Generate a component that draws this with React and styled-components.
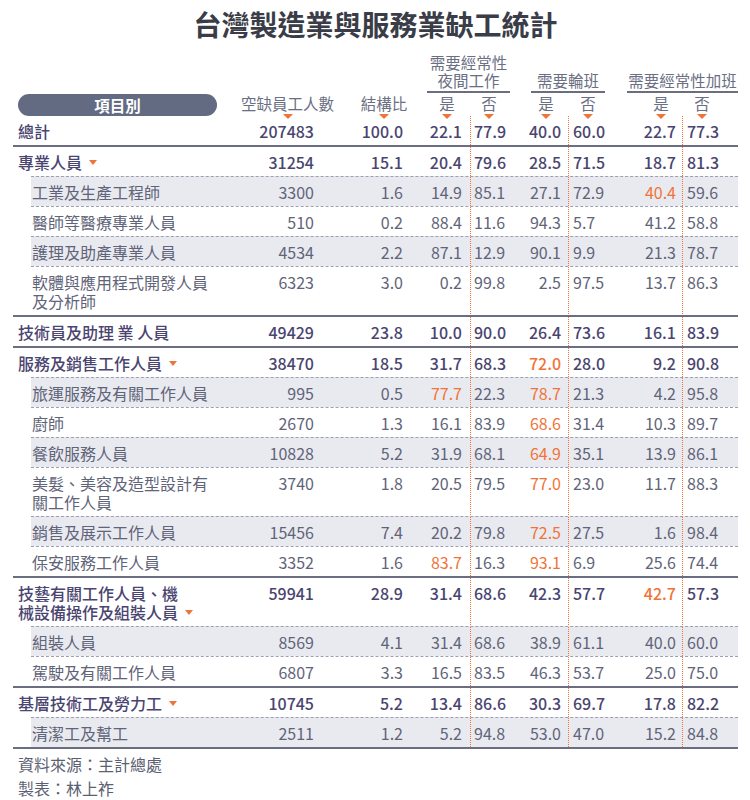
import React from 'react';
import styled, { createGlobalStyle } from 'styled-components';

const ORANGE = '#f07438';
const COLS = '1fr 74px 89px 67px 59px 39px 53px 61px 56px';
const FONT = '"Noto Sans CJK TC", "Noto Sans CJK JP", "Noto Sans", sans-serif';

const GlobalStyle = createGlobalStyle`
  html, body { margin: 0; padding: 0; background: #ffffff; }
  body { font-family: ${FONT}; }
`;

const Page = styled.div`
  width: 725px;
  padding: 8px 12px 0 13px;
  font-family: ${FONT};
`;

const Title = styled.h1`
  margin: 0;
  font-size: 28px;
  line-height: 32px;
  font-weight: 700;
  text-align: center;
  color: #3a3d47;
`;

const Header = styled.div`
  display: grid;
  grid-template-columns: ${COLS};
  grid-template-rows: auto 22px;
  row-gap: 1px;
  margin-top: 13px;
  color: #6b6f84;
  font-size: 15.5px;
`;

const GroupTitle = styled.div`
  grid-row: 1;
  grid-column: ${(p) => p.$col} / span 2;
  margin: 0 ${(p) => p.$mr}px 0 ${(p) => p.$ml}px;
  align-self: end;
  padding-bottom: 2px;
  border-bottom: 2px solid #6b6e80;
  line-height: 18px;
  text-align: center;
  white-space: pre;
`;

const Pill = styled.div`
  grid-row: 2;
  grid-column: 1;
  margin-left: 5px;
  width: 199px;
  height: 22px;
  border-radius: 11px;
  background: #636b82;
  color: #ffffff;
  font-weight: 700;
  font-size: 15.5px;
  line-height: 22px;
  text-align: center;
`;

const HeadCell = styled.div`
  grid-row: 2;
  display: flex;
  justify-content: ${(p) => (p.$align === 'right' ? 'flex-end' : 'flex-start')};
  padding-left: ${(p) => (p.$align === 'left' ? p.$pad : 0)}px;
  padding-right: ${(p) => (p.$align === 'right' ? p.$pad : 0)}px;
`;

const HeadMark = styled.div`
  width: ${(p) => p.$w}px;
  display: flex;
  flex-direction: column;
  align-items: center;
`;

const HeadText = styled.span`
  line-height: 19px;
  white-space: nowrap;
`;

const Tri = styled.span`
  display: inline-block;
  width: 0;
  height: 0;
  border-left: ${(p) => p.$w / 2}px solid transparent;
  border-right: ${(p) => p.$w / 2}px solid transparent;
  border-top: 5px solid ${ORANGE};
`;

const HeadTri = styled(Tri)`
  margin-top: 1px;
`;

const InlineTri = styled(Tri)`
  margin-left: 7px;
  vertical-align: 4px;
`;

const Group = styled.div`
  border-bottom: 2px solid #6b6d80;
`;

const Row = styled.div`
  display: grid;
  grid-template-columns: ${COLS};
  margin-left: ${(p) => (p.$sub ? 18 : 0)}px;
  border-top: ${(p) => (p.$sub ? '1px dashed #9d9fb3' : '0')};
  background: ${(p) => (p.$shade ? '#e9eaf0' : 'transparent')};
  color: ${(p) => (p.$sub ? '#5f6479' : '#4a4570')};
  font-size: 16px;
  line-height: 19px;
  font-weight: ${(p) => (p.$sub ? 400 : 500)};
`;

const LabelCell = styled.div`
  padding: 6px 0 4px ${(p) => (p.$sub ? 1 : 5)}px;
  white-space: pre-line;
`;

const Cell = styled.div`
  padding-top: 6px;
  padding-bottom: 4px;
  text-align: ${(p) => p.$align};
  padding-left: ${(p) => (p.$align === 'left' ? p.$pad + (p.$div ? 1 : 0) : 0)}px;
  padding-right: ${(p) => (p.$align === 'right' ? p.$pad : 0)}px;
  background-image: ${(p) =>
    p.$div ? `linear-gradient(to bottom, ${ORANGE} 50%, transparent 50%)` : 'none'};
  background-size: 1px 2px;
  background-repeat: repeat-y;
  background-position: 0 0;
  color: ${(p) => (p.$hi ? ORANGE : 'inherit')};
  white-space: nowrap;
`;

const Footer = styled.div`
  padding: 3px 0 0 5px;
  font-size: 16px;
  line-height: 24px;
  color: #5b5f72;
`;

const NUM_COLS = [
  { align: 'right', pad: 0, w: 53, head: '空缺員工人數' },
  { align: 'right', pad: 0, w: 38, head: '結構比' },
  { align: 'right', pad: 8, w: 30, head: '是' },
  { align: 'left', pad: 3, w: 30, head: '否', div: true },
  { align: 'right', pad: 7, w: 30, head: '是' },
  { align: 'left', pad: 4, w: 30, head: '否', div: true },
  { align: 'right', pad: 6, w: 30, head: '是' },
  { align: 'left', pad: 4, w: 30, head: '否', div: true },
];

const GROUP_TITLES = [
  { text: '需要經常性\n夜間工作', col: 4, ml: 24, mr: 19 },
  { text: '需要輪班', col: 6, ml: 2, mr: 16 },
  { text: '需要經常性加班', col: 8, ml: 6, mr: 0 },
];

const GROUPS = [
  { label: '總計', vals: ['207483', '100.0', '22.1', '77.9', '40.0', '60.0', '22.7', '77.3'], subs: [] },
  {
    label: '專業人員', tri: true,
    vals: ['31254', '15.1', '20.4', '79.6', '28.5', '71.5', '18.7', '81.3'],
    subs: [
      { label: '工業及生產工程師', vals: ['3300', '1.6', '14.9', '85.1', '27.1', '72.9', '40.4', '59.6'], hi: [6] },
      { label: '醫師等醫療專業人員', vals: ['510', '0.2', '88.4', '11.6', '94.3', '5.7', '41.2', '58.8'] },
      { label: '護理及助產專業人員', vals: ['4534', '2.2', '87.1', '12.9', '90.1', '9.9', '21.3', '78.7'] },
      { label: '軟體與應用程式開發人員\n及分析師', vals: ['6323', '3.0', '0.2', '99.8', '2.5', '97.5', '13.7', '86.3'] },
    ],
  },
  { label: '技術員及助理 業 人員', vals: ['49429', '23.8', '10.0', '90.0', '26.4', '73.6', '16.1', '83.9'], subs: [] },
  {
    label: '服務及銷售工作人員', tri: true, hi: [4],
    vals: ['38470', '18.5', '31.7', '68.3', '72.0', '28.0', '9.2', '90.8'],
    subs: [
      { label: '旅運服務及有關工作人員', vals: ['995', '0.5', '77.7', '22.3', '78.7', '21.3', '4.2', '95.8'], hi: [2, 4] },
      { label: '廚師', vals: ['2670', '1.3', '16.1', '83.9', '68.6', '31.4', '10.3', '89.7'], hi: [4] },
      { label: '餐飲服務人員', vals: ['10828', '5.2', '31.9', '68.1', '64.9', '35.1', '13.9', '86.1'], hi: [4] },
      { label: '美髮、美容及造型設計有\n關工作人員', vals: ['3740', '1.8', '20.5', '79.5', '77.0', '23.0', '11.7', '88.3'], hi: [4] },
      { label: '銷售及展示工作人員', vals: ['15456', '7.4', '20.2', '79.8', '72.5', '27.5', '1.6', '98.4'], hi: [4] },
      { label: '保安服務工作人員', vals: ['3352', '1.6', '83.7', '16.3', '93.1', '6.9', '25.6', '74.4'], hi: [2, 4] },
    ],
  },
  {
    label: '技藝有關工作人員、機\n械設備操作及組裝人員', tri: true, hi: [6],
    vals: ['59941', '28.9', '31.4', '68.6', '42.3', '57.7', '42.7', '57.3'],
    subs: [
      { label: '組裝人員', vals: ['8569', '4.1', '31.4', '68.6', '38.9', '61.1', '40.0', '60.0'] },
      { label: '駕駛及有關工作人員', vals: ['6807', '3.3', '16.5', '83.5', '46.3', '53.7', '25.0', '75.0'] },
    ],
  },
  {
    label: '基層技術工及勞力工', tri: true,
    vals: ['10745', '5.2', '13.4', '86.6', '30.3', '69.7', '17.8', '82.2'],
    subs: [
      { label: '清潔工及幫工', vals: ['2511', '1.2', '5.2', '94.8', '53.0', '47.0', '15.2', '84.8'] },
    ],
  },
];

function DataRow({ label, vals, hi = [], sub, shade, tri }) {
  return (
    <Row $sub={sub} $shade={shade}>
      <LabelCell $sub={sub}>
        {label}
        {tri && <InlineTri $w={9} />}
      </LabelCell>
      {vals.map((v, i) => {
        const c = NUM_COLS[i];
        return (
          <Cell key={i} $align={c.align} $pad={c.pad} $div={c.div} $hi={hi.includes(i)}>
            {v}
          </Cell>
        );
      })}
    </Row>
  );
}

export default function App() {
  return (
    <>
      <GlobalStyle />
      <Page>
        <Title>台灣製造業與服務業缺工統計</Title>
        <Header>
          {GROUP_TITLES.map((g) => (
            <GroupTitle key={g.col} $col={g.col} $ml={g.ml} $mr={g.mr}>
              {g.text}
            </GroupTitle>
          ))}
          <Pill>項目別</Pill>
          {NUM_COLS.map((c, i) => (
            <HeadCell key={i} $align={c.align} $pad={c.pad + (c.div ? 1 : 0)}>
              <HeadMark $w={c.w}>
                <HeadText>{c.head}</HeadText>
                <HeadTri $w={10} />
              </HeadMark>
            </HeadCell>
          ))}
        </Header>
        {GROUPS.map((g) => (
          <Group key={g.label}>
            <DataRow label={g.label} vals={g.vals} hi={g.hi} tri={g.tri} />
            {g.subs.map((s, i) => (
              <DataRow key={s.label} label={s.label} vals={s.vals} hi={s.hi} sub shade={i % 2 === 0} />
            ))}
          </Group>
        ))}
        <Footer>
          <div>資料來源：主計總處</div>
          <div>製表：林上祚</div>
        </Footer>
      </Page>
    </>
  );
}
